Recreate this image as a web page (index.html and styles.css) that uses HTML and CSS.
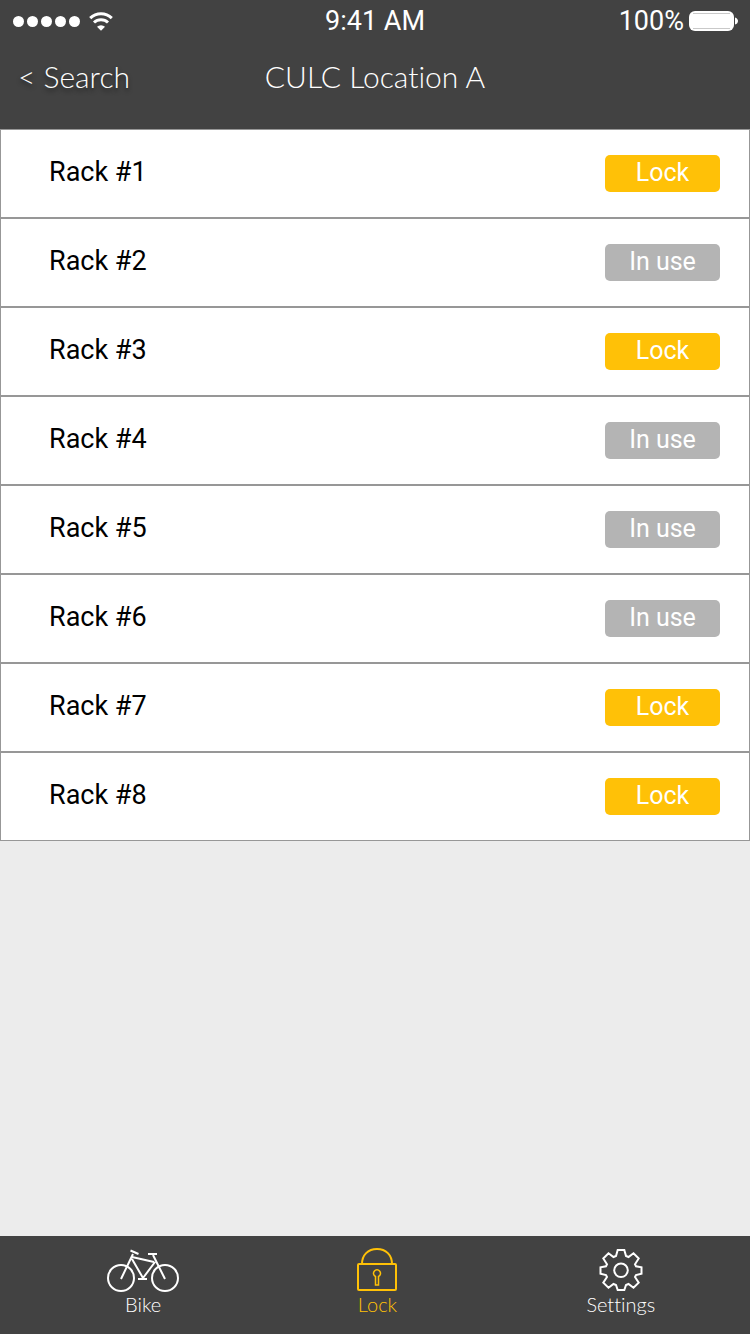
FILE: index.html
```html
<!DOCTYPE html>
<html lang="en">
<head>
<meta charset="utf-8">
<meta name="viewport" content="width=device-width, initial-scale=1">
<title>CULC Location A</title>
<link rel="stylesheet" href="styles.css">
</head>
<body>
<div class="app">
  <header class="header">
    <div class="status">
      <div class="status-left">
        <span class="signal"><i class="dot"></i><i class="dot"></i><i class="dot"></i><i class="dot"></i><i class="dot"></i></span>
        <svg class="wifi" viewBox="0 0 24 19" aria-hidden="true">
          <path d="M1.200 6.200a15.600 15.600 0 0 1 21.600 0M5 10.500a10.200 10.200 0 0 1 14 0" fill="none" stroke="currentColor" stroke-width="3"/>
          <path d="M12 18.800 8 14.800a5.800 5.800 0 0 1 8 0z" fill="currentColor"/>
        </svg>
      </div>
      <span class="time">9:41 AM</span>
      <div class="status-right">
        <span>100%</span>
        <svg class="battery" viewBox="0 0 49 20" aria-hidden="true">
          <rect width="45" height="20" rx="6" fill="#fff"/>
          <path d="M4 2.500h37M4 17.500h37" stroke="#c9c9c9"/>
          <path d="M46 6.500c4 1 4 6 0 7z" fill="#fff"/>
        </svg>
      </div>
    </div>
    <nav class="navbar">
      <a class="back" href="#search">&lt; Search</a>
      <h1 class="title">CULC Location A</h1>
    </nav>
  </header>
  <main class="content">
    <ul class="racks">
      <li class="rack"><span class="name">Rack #1</span><button class="action" type="button">Lock</button></li>
      <li class="rack"><span class="name">Rack #2</span><button class="action" type="button" disabled>In use</button></li>
      <li class="rack"><span class="name">Rack #3</span><button class="action" type="button">Lock</button></li>
      <li class="rack"><span class="name">Rack #4</span><button class="action" type="button" disabled>In use</button></li>
      <li class="rack"><span class="name">Rack #5</span><button class="action" type="button" disabled>In use</button></li>
      <li class="rack"><span class="name">Rack #6</span><button class="action" type="button" disabled>In use</button></li>
      <li class="rack"><span class="name">Rack #7</span><button class="action" type="button">Lock</button></li>
      <li class="rack"><span class="name">Rack #8</span><button class="action" type="button">Lock</button></li>
    </ul>
  </main>
  <nav class="tabs">
    <a class="tab" href="#bike">
      <svg class="icon bike" viewBox="0 0 74 44" aria-hidden="true">
        <g fill="none" stroke="currentColor" stroke-width="2">
          <circle cx="15" cy="30" r="13"/><circle cx="59" cy="30" r="13"/>
          <path d="M15 31 27 6M24.500 2.500l8 3.500M26 9l22 5M26 11l11 19M49 14 37 30M59 31 47 7M42 6h9M32 31h9"/>
        </g>
      </svg>
      <span>Bike</span>
    </a>
    <a class="tab active" href="#lock" aria-current="page">
      <svg class="icon lock" viewBox="0 0 42 44" aria-hidden="true">
        <g fill="none" stroke="currentColor" stroke-width="2">
          <rect x="2" y="16" width="38" height="26" rx="1"/>
          <path d="M6 16C6 7 12 1 21 1s15 6 15 15"/>
          <path d="M19.500 37v-8.500a3.500 3.500 0 1 1 3 0V37z" stroke-width="1.500"/>
        </g>
      </svg>
      <span>Lock</span>
    </a>
    <a class="tab" href="#settings">
      <svg class="icon gear" viewBox="0 0 44 44" aria-hidden="true">
        <g fill="none" stroke="currentColor" stroke-width="2">
          <path d="M18.700 2h6.600L27 8l2.500 1 5-3.700 5.200 5.200-3.700 5.800 1 2 5.500 1v6.400L37 27l-1 2 3.700 5.700-5.200 5L29.500 36 27 37l-1.700 5h-6.600L17 37l-2.500-1-5 3.700-5.200-5L8 29l-1-2-5.500-1.300v-6.400l5.500-1 1-2-3.700-5.800 5.200-5.200 5 3.700L17 8z"/>
          <circle cx="22" cy="22.300" r="6.800"/>
        </g>
      </svg>
      <span>Settings</span>
    </a>
  </nav>
</div>
</body>
</html>
```
FILE: styles.css
```css
* {
  box-sizing: border-box;
}

body {
  margin: 0;
  font-family: Roboto, "Liberation Sans", sans-serif;
  background: #ececec;
}

.app {
  display: flex;
  flex-direction: column;
  min-height: 100vh;
}

.header {
  padding-bottom: 27px;
  background: #424242;
  color: #fff;
}

.status,
.navbar {
  display: grid;
  grid-template-columns: 1fr auto 1fr;
  align-items: center;
}

.status {
  height: 40px;
  padding: 2px 12px 0;
  font-size: 27px;
}

.status-left,
.status-right,
.signal {
  display: flex;
  align-items: center;
}

.status-left {
  gap: 9px;
}

.status-right {
  justify-content: flex-end;
  gap: 5px;
}

.signal {
  gap: 3px;
  padding-left: 1px;
}

.dot {
  width: 11px;
  height: 11px;
  border-radius: 50%;
  background: #fff;
}

.wifi {
  width: 24px;
  height: 19px;
}

.battery {
  width: 49px;
  height: 20px;
}

.navbar {
  height: 52px;
  margin-top: 10px;
  padding: 0 18px;
  font-family: Lato, "Open Sans", sans-serif;
  font-weight: 300;
  font-variant-ligatures: none;
}

.back {
  color: inherit;
  font-size: 30px;
  text-decoration: none;
  text-shadow: 0 3px 4px rgba(0, 0, 0, 0.5);
}

.title {
  margin: 0;
  font-size: 30px;
  font-weight: inherit;
}

.content {
  flex: 1;
}

.racks {
  margin: 0;
  padding: 0;
  list-style: none;
}

.rack {
  display: flex;
  align-items: center;
  justify-content: space-between;
  min-height: 89px;
  padding: 0 29px 0 48px;
  border: 1px solid #979797;
  background: #fff;
  color: #000;
  font-size: 27px;
}

.name {
  padding-bottom: 3px;
}

.action {
  width: 115px;
  height: 37px;
  padding: 0 0 2px;
  border: 0;
  border-radius: 5px;
  background: #ffc107;
  color: #fff;
  font: 400 25px/35px Roboto, "Liberation Sans", sans-serif;
}

.action:disabled {
  background: #b4b4b4;
}

.tabs {
  display: grid;
  grid-template-columns: 39fr 39fr 42fr;
  min-height: 98px;
  padding: 12px 3px 0 26px;
  background: #424242;
  font: 300 20px/24px Lato, "Open Sans", sans-serif;
  font-variant-ligatures: none;
}

.tab {
  display: flex;
  flex-direction: column;
  align-items: center;
  color: #fff;
  text-decoration: none;
}

.tab.active {
  color: #ffc107;
}

.icon {
  height: 44px;
}

.bike {
  width: 74px;
}

.lock {
  width: 42px;
}

.gear {
  width: 44px;
}
```
